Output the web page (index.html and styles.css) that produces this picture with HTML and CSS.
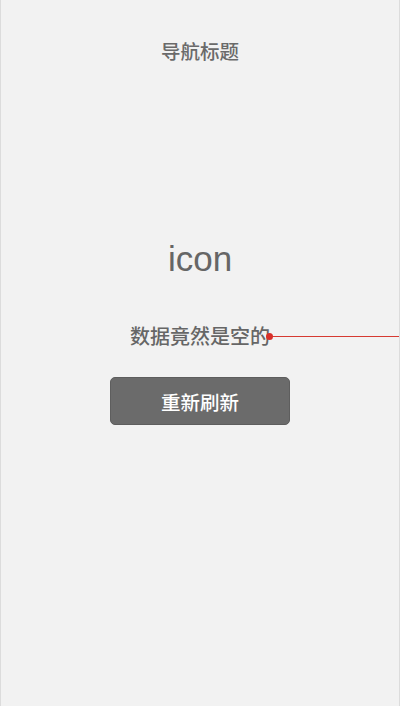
FILE: index.html
```html
<!DOCTYPE html>
<html lang="zh">
<head>
<meta charset="utf-8">
<link rel="stylesheet" href="styles.css">
</head>
<body>
<div class="page">
  <header class="nav">导航标题</header>
  <main class="empty">
    <div class="icon">icon</div>
    <div class="msg-row">
      <span class="msg">数据竟然是空的</span>
    </div>
    <button class="refresh">重新刷新</button>
  </main>
  <div class="marker"><span class="dot"></span></div>
</div>
</body>
</html>
```
FILE: styles.css
```css
html, body {
  margin: 0;
  padding: 0;
  height: 100%;
}
body {
  background: #f2f2f2;
  font-family: "Liberation Sans", "Noto Sans CJK SC", sans-serif;
  color: #666;
}
.page {
  position: relative;
  height: 706px;
  box-sizing: border-box;
  border-left: 1px solid #dcdcdc;
  border-right: 1px solid #dcdcdc;
  background: #f2f2f2;
  overflow: hidden;
}
.nav {
  height: 104px;
  line-height: 104px;
  text-align: center;
  font-size: 19.5px;
  font-weight: 500;
  color: #6a6a6a;
}
.empty {
  display: flex;
  flex-direction: column;
  align-items: center;
  padding-top: 135px;
}
.icon {
  font-size: 35px;
  line-height: 40px;
  color: #666;
}
.msg-row {
  margin-top: 46px;
  height: 24px;
  line-height: 24px;
}
.msg {
  font-size: 20px;
  font-weight: 500;
  color: #666;
}
.refresh {
  margin-top: 28px;
  width: 180px;
  height: 48px;
  border: 1px solid #5e5e5e;
  border-radius: 5px;
  background: #6b6b6b;
  color: #fff;
  font-family: "Liberation Sans", "Noto Sans CJK SC", sans-serif;
  font-size: 19.5px;
  font-weight: 500;
  padding: 0;
}
.marker {
  position: absolute;
  left: 268px;
  right: 0;
  top: 336px;
  height: 1px;
  background: #d63a32;
}
.dot {
  position: absolute;
  left: -3px;
  top: -3px;
  width: 7px;
  height: 7px;
  border-radius: 50%;
  background: #d8302a;
}
```
